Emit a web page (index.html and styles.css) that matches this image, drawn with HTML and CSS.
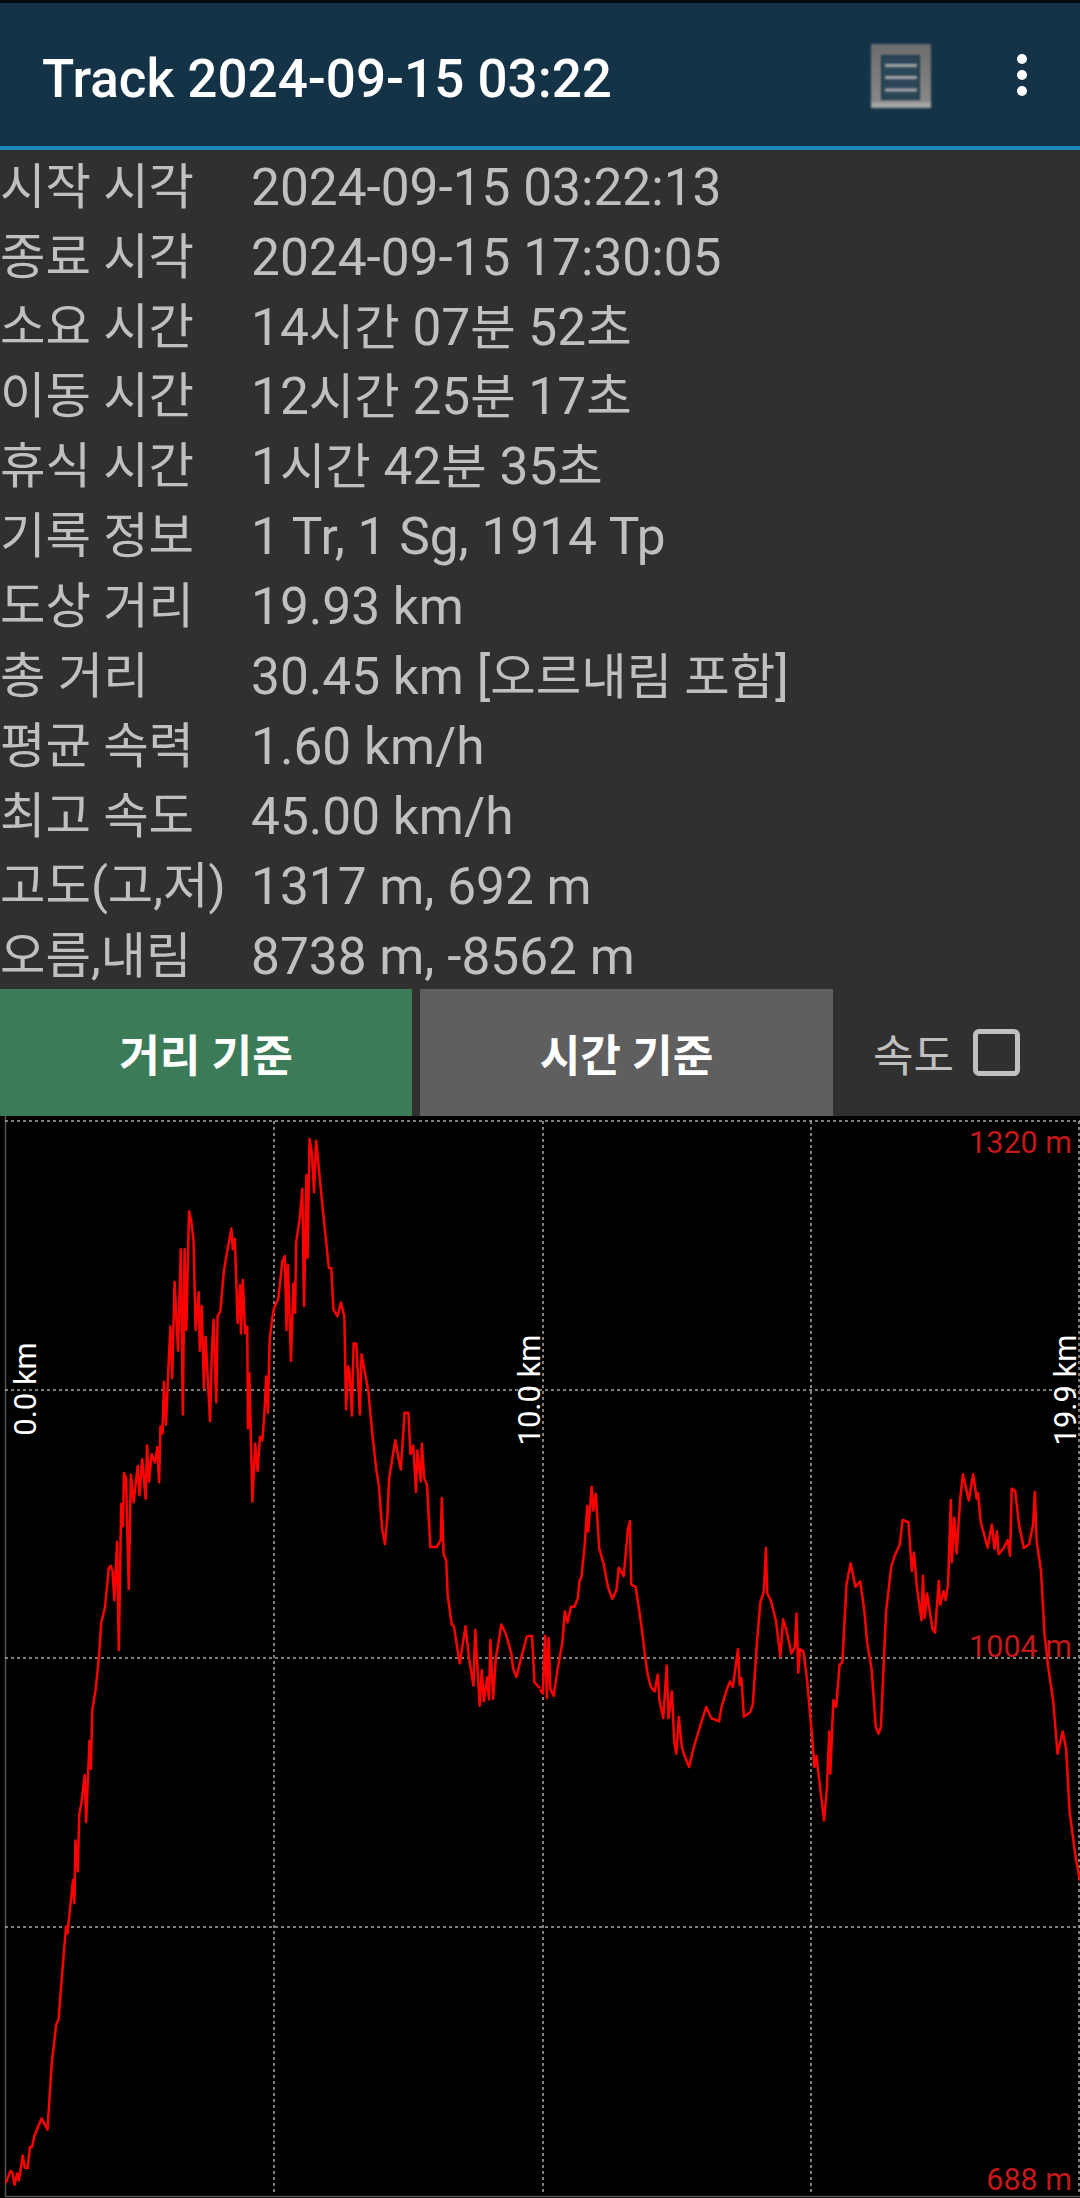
FILE: index.html
```html
<!DOCTYPE html>
<html lang="ko">
<head>
<meta charset="utf-8">
<title>Track</title>
<link rel="stylesheet" href="styles.css">
</head>
<body>
<div class="app">
  <header class="bar">
    <h1 class="title">Track 2024-09-15 03:22</h1>
    <div class="actions">
      <svg class="list-icon" width="60" height="64" viewBox="0 0 60 64" aria-hidden="true">
        <defs>
          <linearGradient id="tile" x1="0" y1="0" x2="0" y2="1">
            <stop offset="0" stop-color="#6c6d6e"/>
            <stop offset=".9" stop-color="#8a8887"/>
            <stop offset=".93" stop-color="#a6a6a6"/>
            <stop offset="1" stop-color="#a6a6a6"/>
          </linearGradient>
        </defs>
        <rect width="60" height="64" fill="url(#tile)"/>
        <rect x="11" y="12" width="37" height="43" fill="#2b4656" stroke="#1b3b4f" stroke-width="2"/>
        <path d="M14 21.5H46M14 33.5H46M14 46H46" stroke="#a8a9a9" stroke-width="3" fill="none"/>
      </svg>
      <div class="more"><i></i><i></i><i></i></div>
    </div>
  </header>

  <section class="info">
    <div class="row"><span class="key">시작 시각</span><span>2024-09-15 03:22:13</span></div>
    <div class="row"><span class="key">종료 시각</span><span>2024-09-15 17:30:05</span></div>
    <div class="row"><span class="key">소요 시간</span><span>14<span class="ko">시간</span> 07<span class="ko">분</span> 52<span class="ko">초</span></span></div>
    <div class="row"><span class="key">이동 시간</span><span>12<span class="ko">시간</span> 25<span class="ko">분</span> 17<span class="ko">초</span></span></div>
    <div class="row"><span class="key">휴식 시간</span><span>1<span class="ko">시간</span> 42<span class="ko">분</span> 35<span class="ko">초</span></span></div>
    <div class="row"><span class="key">기록 정보</span><span>1 Tr, 1 Sg, 1914 Tp</span></div>
    <div class="row"><span class="key">도상 거리</span><span>19.93 km</span></div>
    <div class="row"><span class="key">총 거리</span><span>30.45 km [<span class="ko">오르내림 포함</span>]</span></div>
    <div class="row"><span class="key">평균 속력</span><span>1.60 km/h</span></div>
    <div class="row"><span class="key">최고 속도</span><span>45.00 km/h</span></div>
    <div class="row"><span class="key">고도(고,저)</span><span>1317 m, 692 m</span></div>
    <div class="row"><span class="key">오름,내림</span><span>8738 m, -8562 m</span></div>
  </section>

  <section class="controls">
    <button class="btn btn-green" type="button">거리 기준</button>
    <button class="btn btn-gray" type="button">시간 기준</button>
    <div class="speed"><span>속도</span><i class="check"></i></div>
  </section>

  <section class="chart">
    <svg class="plot" viewBox="0 1116 1080 1082" width="1080" height="1082">
      <path class="frame" d="M5.5 1116V2196.5H1080"/>
      <path class="grid" d="M5 1121H1080M5 1390H1080M5 1658H1080M5 1927H1080"/>
      <path class="grid" d="M274 1121V2192M543 1121V2192M811 1121V2192M1079 1121V2192"/>

      <path class="trace" transform="translate(0,1658) scale(.34435)" d="M17 1525L30 1490 36 1495 42 1530 50 1497 55 1517 66 1445 72 1480 80 1482 87 1420 93 1420 100 1388 110 1362 121 1337 138 1370 150 1180 163 1065 170 1050 185 860 192 780 196 800 212 645 216 712 219 530 226 620 230 455 236 425 246 340 250 476 260 240 264 322 268 150 278 90 287 0"/>

      <path class="trace" transform="translate(0,1120) scale(.34435)" d="M287 1563L294 1460 305 1415 316 1300 322 1295 327 1310 332 1395 340 1225 345 1540 352 1115 357 1180 360 1025 366 1040 374 1362 380 1030 388 1110 400 1005 405 1090 413 985 423 1100 427 945 433 1050 440 970 450 995 457 950 462 1052 466 890 472 910 476 760 482 885 490 700 495 600 500 750 507 470 517 670 525 375 531 855 536 375 541 610 549 265 555 290 562 350 568 610 577 500 580 670 586 540 592 780 597 630 610 875 615 680 620 580 628 820 632 570 640 555 650 440 660 380 672 315 676 375 682 345 690 590 697 480 700 620 705 465 712 620 718 600 720 895 724 735 733 1108 741 940 748 1020 755 920 762 930 768 850 773 745 778 850 783 640 790 580 796 545 808 520 820 410 827 395 832 610 836 420 845 700 852 475 857 560 860 355 870 290 878 200 883 540 890 160 893 400 899 55 906 100 912 210 918 60 924 120 930 185 940 285 955 430 962 430 968 550 980 570 990 530 1000 570 1005 840 1011 715 1015 730 1022 858 1027 648 1035 650 1045 855 1050 680 1070 790 1080 900 1092 1010 1100 1060 1110 1190 1118 1232 1125 1150 1130 1040 1148 930 1156 975 1164 1015 1175 850 1186 850 1192 970 1200 945 1208 1080 1212 960 1222 1050 1225 940 1232 1040 1240 1060 1250 1240 1268 1240 1280 1220 1283 1098 1288 1260 1296 1280 1300 1380 1312 1465 1318 1470 1335 1578 1352 1470 1362 1563 1375 1643 1380 1480 1393 1701 1399 1598 1405 1688 1415 1618 1420 1683 1424 1510 1432 1681 1440 1563 1456 1465 1470 1495 1485 1550 1490 1593 1500 1618 1510 1575 1530 1500 1545 1498 1552 1633 1568 1650"/>

      <path class="trace" transform="translate(540,1500) scale(.34435,.44515)" d="M0 425L8 435 15 305 20 445 25 310 30 425 40 440 50 385 65 320 72 250 80 275 90 240 100 240 110 220 115 180 120 175 130 100 137 13 140 71 150 -30 155 24 162 -14 172 109 185 144 197 195 210 222 222 202 229 152 243 171 255 67 261 47 265 190 278 195 295 285 305 350 312 390 322 420 333 430 342 392 347 450 358 490 368 372 373 490 383 430 390 545 396 570 403 487 412 555 420 575 433 600 445 560 470 495 483 465 497 490 520 497 527 465 545 420 552 408 560 420 575 335 580 415 585 400 592 487 610 477 618 460 630 320 640 230 650 205 656 108 660 210 670 225 685 270 698 352 706 268 715 290 730 345 740 330 745 255 750 388 755 335 765 340 775 400 790 530 797 600 803 575 808 610 825 720 833 650 840 520 843 615 852 450 860 465 870 370 878 365 890 190 902 142 916 195 930 183 942 250 950 320 963 380 975 510 983 525 990 510 1005 250 1020 150 1030 125 1045 100 1053 45 1070 50 1080 160 1086 118 1095 200 1108 270 1112 170 1117 265 1124 210 1140 290 1147 298 1158 182 1162 235 1172 205 1178 225 1185 190 1193 0 1196 140 1203 40 1210 120 1220 0 1228 -58 1235 -34 1245 1 1258 -58 1268 -3 1272 -15 1280 50 1300 107 1312 55 1320 110 1327 70 1332 122 1345 110 1358 90 1365 125 1370 -26 1380 -20 1392 60 1405 108 1420 100 1432 55 1437 -18 1442 90 1455 160 1465 300 1475 370 1490 450 1503 570 1518 520 1528 560 1538 700 1555 800 1568 855"/>

      <text class="axis-x" transform="translate(36,1389) rotate(-90)">0.0 km</text>
      <text class="axis-x" transform="translate(540,1390) rotate(-90)">10.0 km</text>
      <text class="axis-x" transform="translate(1076,1390) rotate(-90)">19.9 km</text>
      <text class="axis-y" x="1072" y="1153">1320 m</text>
      <text class="axis-y" x="1072" y="1657">1004 m</text>
      <text class="axis-y" x="1072" y="2190">688 m</text>
    </svg>
  </section>
</div>
</body>
</html>
```
FILE: styles.css
```css
* { box-sizing: border-box; }
html, body { margin: 0; padding: 0; background: #000; }
.app {
  width: 1080px;
  height: 2198px;
  overflow: hidden;
  display: flex;
  flex-direction: column;
  background: #303030;
  font-family: Roboto, "Noto Sans CJK KR", sans-serif;
  border-top: 3px solid #04090d;
}
.bar {
  height: 147px;
  flex: none;
  display: flex;
  align-items: center;
  justify-content: space-between;
  background: #143347;
  border-bottom: 4px solid #1b8ab5;
  padding: 0 53px 0 42px;
}
.title {
  margin: 0;
  font-size: 53px;
  font-weight: 500;
  color: #fff;
  line-height: 1;
  padding-top: 9px;
}
.actions { display: flex; align-items: center; gap: 86px; }
.list-icon { display: block; filter: blur(1.2px); margin-top: 2px; }
.more { display: flex; flex-direction: column; gap: 6px; }
.more i { display: block; width: 10px; height: 10px; border-radius: 50%; background: #fff; }
.info {
  height: 839px;
  flex: none;
  display: grid;
  grid-template-rows: repeat(12, 1fr);
  color: #c0c0c0;
  font-size: 51.4px;
}
.row {
  display: grid;
  grid-template-columns: 251px 1fr;
  align-items: center;
  white-space: nowrap;
  line-height: 1;
  padding-top: 5px;
}
.key { font-size: 49.4px; }
.ko { font-size: 49.4px; }
.controls {
  height: 127px;
  flex: none;
  display: flex;
  background: #303030;
}
.btn {
  border: 0;
  padding: 0;
  height: 100%;
  font-family: inherit;
  font-size: 44.2px;
  font-weight: 700;
  color: #fff;
}
.btn-green { width: 412px; background: #3b7b58; }
.btn-gray { width: 413px; margin-left: 8px; background: #5f5f5f; }
.speed {
  flex: 1;
  display: flex;
  align-items: center;
  padding-left: 40px;
  gap: 19px;
  color: #c0c0c0;
  font-size: 44px;
}
.check {
  display: block;
  width: 47px;
  height: 47px;
  border: 5px solid #c0c0c0;
  border-radius: 6px;
}
.chart { flex: 1; background: #000; min-height: 0; }
.plot { display: block; }
.frame { fill: none; stroke: #555; stroke-width: 1.5; }
.grid { fill: none; stroke: #a8a8a8; stroke-width: 1.5; stroke-dasharray: 3 3; }
.trace {
  fill: none;
  stroke: #f00;
  stroke-width: 2.5;
  stroke-linejoin: round;
  vector-effect: non-scaling-stroke;
}
.axis-x { fill: #fff; font-size: 31px; text-anchor: middle; font-family: Roboto, sans-serif; }
.axis-y { fill: #c4181a; font-size: 30.5px; text-anchor: end; font-family: Roboto, sans-serif; }
```
